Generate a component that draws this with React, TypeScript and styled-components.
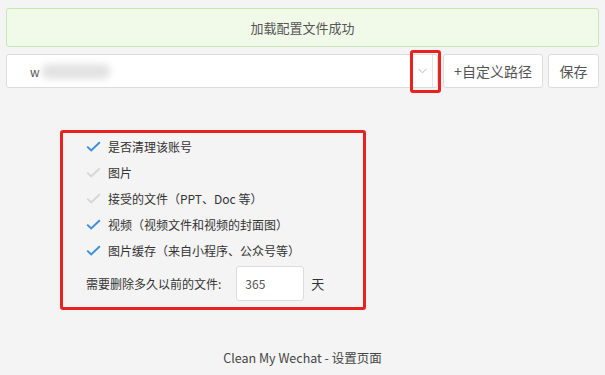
import React from "react";
import styled, { createGlobalStyle } from "styled-components";

const GlobalStyle = createGlobalStyle`
  html, body {
    margin: 0;
    padding: 0;
    background: #f4f4f4;
  }
  body {
    font-family: "Noto Sans CJK SC", "Open Sans", sans-serif;
    color: #555;
  }
`;

const Page = styled.div`
  width: 605px;
  height: 375px;
  box-sizing: border-box;
  padding: 8px 6px 0 6px;
  display: flex;
  flex-direction: column;
`;

const Alert = styled.div`
  height: 39px;
  box-sizing: border-box;
  border: 1px solid #c6e8b4;
  border-radius: 3px;
  background: #f1fae9;
  display: flex;
  align-items: center;
  justify-content: center;
  font-size: 13px;
  color: #555;
`;

const PathRow = styled.div`
  margin-top: 7px;
  display: flex;
  gap: 5px;
  height: 34px;
`;

const Select = styled.div`
  position: relative;
  flex: 1;
  display: flex;
  background: #fff;
  border: 1px solid #dcdcdc;
  border-radius: 3px;
`;

const SelectValue = styled.div`
  flex: 1;
  display: flex;
  align-items: center;
  padding-left: 23px;
  font-size: 12px;
  color: #555;
`;

const Blurred = styled.span`
  display: inline-block;
  width: 68px;
  height: 15px;
  margin-left: 2px;
  background: #e2e2e2;
  border-radius: 6px;
  filter: blur(3.5px);
`;

const ArrowBox = styled.div`
  width: 20px;
  margin: 0 4px 0 0;
  border-left: 1px solid #e6e6e6;
  border-right: 1px solid #e6e6e6;
  display: flex;
  align-items: center;
  justify-content: center;
`;

const Highlight = styled.div<{ $top: number; $left: number; $w: number; $h: number }>`
  position: absolute;
  top: ${(p) => p.$top}px;
  left: ${(p) => p.$left}px;
  width: ${(p) => p.$w}px;
  height: ${(p) => p.$h}px;
  box-sizing: border-box;
  border: 3px solid #e8231f;
  border-radius: 3px;
  pointer-events: none;
`;

const Button = styled.button<{ $w: number }>`
  width: ${(p) => p.$w}px;
  height: 34px;
  box-sizing: border-box;
  border: 1px solid #dcdcdc;
  border-radius: 3px;
  background: #fff;
  color: #555;
  font-family: "Noto Sans CJK SC", sans-serif;
  font-size: 14px;
  padding: 0;
`;

const Options = styled.div`
  margin: 42px 0 0 54px;
  width: 306px;
  height: 180px;
  box-sizing: border-box;
  border: 3px solid #e8231f;
  border-radius: 3px;
  padding: 0 0 0 23px;
  display: flex;
  flex-direction: column;
`;

const Option = styled.div`
  height: 26px;
  display: flex;
  align-items: center;
  gap: 7px;
  font-size: 12px;
  color: #333;
`;

const DaysRow = styled.div`
  margin-top: 3px;
  display: flex;
  align-items: center;
  font-size: 12px;
  color: #333;
`;

const DaysInput = styled.div`
  margin-left: 15px;
  width: 68px;
  height: 35px;
  box-sizing: border-box;
  border: 1px solid #dcdcdc;
  border-radius: 3px;
  background: #fff;
  display: flex;
  align-items: center;
  padding-left: 8px;
  color: #555;
`;

const Unit = styled.span`
  margin-left: 7px;
  font-size: 13px;
`;

const Footer = styled.div`
  margin-top: 38px;
  text-align: center;
  font-size: 12.5px;
  color: #444;
`;

const Check = ({ on }: { on: boolean }) => (
  <svg width="15" height="11" viewBox="0 0 15 11">
    <path
      d="M1.2 5.6 L5.2 9.4 L13.8 1.2"
      fill="none"
      stroke={on ? "#3b8fe0" : "#d6d6d6"}
      strokeWidth="2"
    />
  </svg>
);

const Chevron = () => (
  <svg width="9" height="6" viewBox="0 0 9 6">
    <path d="M0.5 0.8 L4.5 4.8 L8.5 0.8" fill="none" stroke="#b8b8b8" strokeWidth="1" />
  </svg>
);

const options = [
  { label: "是否清理该账号", on: true },
  { label: "图片", on: false },
  { label: "接受的文件（PPT、Doc 等）", on: false },
  { label: "视频（视频文件和视频的封面图）", on: true },
  { label: "图片缓存（来自小程序、公众号等）", on: true },
];

export default function App() {
  return (
    <>
      <GlobalStyle />
      <Page>
        <Alert>加载配置文件成功</Alert>
        <PathRow>
          <Select>
            <SelectValue>
              w<Blurred />
            </SelectValue>
            <ArrowBox>
              <Chevron />
            </ArrowBox>
            <Highlight $top={-5} $left={403} $w={31} $h={43} />
          </Select>
          <Button $w={100}>+自定义路径</Button>
          <Button $w={51}>保存</Button>
        </PathRow>
        <Options>
          {options.map((o) => (
            <Option key={o.label}>
              <Check on={o.on} />
              {o.label}
            </Option>
          ))}
          <DaysRow>
            需要删除多久以前的文件:
            <DaysInput>365</DaysInput>
            <Unit>天</Unit>
          </DaysRow>
        </Options>
        <Footer>Clean My Wechat - 设置页面</Footer>
      </Page>
    </>
  );
}
